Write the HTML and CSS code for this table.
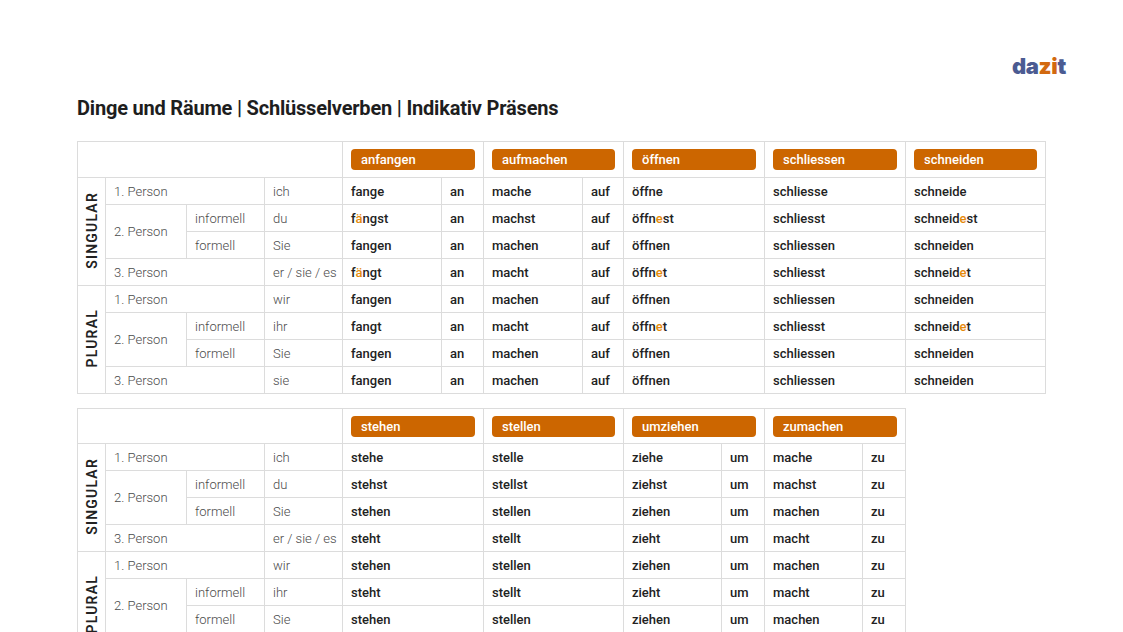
FILE: index.html
```html
<!DOCTYPE html>
<html lang="de">
<head>
<meta charset="utf-8">
<title>Dinge und Räume | Schlüsselverben | Indikativ Präsens</title>
<link rel="stylesheet" href="styles.css">
</head>
<body>
<div class="page">
  <div class="topbar"><span class="logo"><span class="b">da</span><span class="o">zi</span><span class="b">t</span></span></div>
  <h1 class="title">Dinge und Räume | Schlüsselverben | Indikativ Präsens</h1>

  <table class="conj t1">
    <colgroup>
      <col class="w-num"><col class="w-person"><col class="w-form"><col class="w-pron">
      <col class="w-v99"><col class="w-p42"><col class="w-v99"><col class="w-p41">
      <col class="w-v141"><col class="w-v141"><col class="w-v140">
    </colgroup>
    <tr class="head">
      <th colspan="4"></th>
      <th colspan="2"><span class="pill">anfangen</span></th>
      <th colspan="2" class="grp"><span class="pill">aufmachen</span></th>
      <th class="grp"><span class="pill">öffnen</span></th>
      <th class="grp"><span class="pill">schliessen</span></th>
      <th class="grp"><span class="pill">schneiden</span></th>
    </tr>
    <tr>
      <td rowspan="4" class="num"><span class="vert">SINGULAR</span></td>
      <td colspan="2" class="lab">1. Person</td><td class="lab">ich</td>
      <td class="v">fange</td><td class="v">an</td>
      <td class="v grp">mache</td><td class="v">auf</td>
      <td class="v grp">öffne</td>
      <td class="v grp">schliesse</td>
      <td class="v grp">schneide</td>
    </tr>
    <tr>
      <td rowspan="2" class="lab">2. Person</td><td class="lab">informell</td><td class="lab">du</td>
      <td class="v">f<span class="hl">ä</span>ngst</td><td class="v">an</td>
      <td class="v grp">machst</td><td class="v">auf</td>
      <td class="v grp">öffn<span class="hl">e</span>st</td>
      <td class="v grp">schliesst</td>
      <td class="v grp">schneid<span class="hl">e</span>st</td>
    </tr>
    <tr>
      <td class="lab">formell</td><td class="lab">Sie</td>
      <td class="v">fangen</td><td class="v">an</td>
      <td class="v grp">machen</td><td class="v">auf</td>
      <td class="v grp">öffnen</td>
      <td class="v grp">schliessen</td>
      <td class="v grp">schneiden</td>
    </tr>
    <tr>
      <td colspan="2" class="lab">3. Person</td><td class="lab">er / sie / es</td>
      <td class="v">f<span class="hl">ä</span>ngt</td><td class="v">an</td>
      <td class="v grp">macht</td><td class="v">auf</td>
      <td class="v grp">öffn<span class="hl">e</span>t</td>
      <td class="v grp">schliesst</td>
      <td class="v grp">schneid<span class="hl">e</span>t</td>
    </tr>
    <tr>
      <td rowspan="4" class="num"><span class="vert">PLURAL</span></td>
      <td colspan="2" class="lab">1. Person</td><td class="lab">wir</td>
      <td class="v">fangen</td><td class="v">an</td>
      <td class="v grp">machen</td><td class="v">auf</td>
      <td class="v grp">öffnen</td>
      <td class="v grp">schliessen</td>
      <td class="v grp">schneiden</td>
    </tr>
    <tr>
      <td rowspan="2" class="lab">2. Person</td><td class="lab">informell</td><td class="lab">ihr</td>
      <td class="v">fangt</td><td class="v">an</td>
      <td class="v grp">macht</td><td class="v">auf</td>
      <td class="v grp">öffn<span class="hl">e</span>t</td>
      <td class="v grp">schliesst</td>
      <td class="v grp">schneid<span class="hl">e</span>t</td>
    </tr>
    <tr>
      <td class="lab">formell</td><td class="lab">Sie</td>
      <td class="v">fangen</td><td class="v">an</td>
      <td class="v grp">machen</td><td class="v">auf</td>
      <td class="v grp">öffnen</td>
      <td class="v grp">schliessen</td>
      <td class="v grp">schneiden</td>
    </tr>
    <tr>
      <td colspan="2" class="lab">3. Person</td><td class="lab">sie</td>
      <td class="v">fangen</td><td class="v">an</td>
      <td class="v grp">machen</td><td class="v">auf</td>
      <td class="v grp">öffnen</td>
      <td class="v grp">schliessen</td>
      <td class="v grp">schneiden</td>
    </tr>
  </table>

  <table class="conj t2">
    <colgroup>
      <col class="w-num"><col class="w-person"><col class="w-form"><col class="w-pron">
      <col class="w-v141"><col class="w-v140">
      <col class="w-v98"><col class="w-p43"><col class="w-v98"><col class="w-p43">
    </colgroup>
    <tr class="head">
      <th colspan="4"></th>
      <th><span class="pill">stehen</span></th>
      <th class="grp"><span class="pill">stellen</span></th>
      <th colspan="2" class="grp"><span class="pill">umziehen</span></th>
      <th colspan="2" class="grp"><span class="pill">zumachen</span></th>
    </tr>
    <tr>
      <td rowspan="4" class="num"><span class="vert">SINGULAR</span></td>
      <td colspan="2" class="lab">1. Person</td><td class="lab">ich</td>
      <td class="v">stehe</td>
      <td class="v grp">stelle</td>
      <td class="v grp">ziehe</td><td class="v">um</td>
      <td class="v grp">mache</td><td class="v">zu</td>
    </tr>
    <tr>
      <td rowspan="2" class="lab">2. Person</td><td class="lab">informell</td><td class="lab">du</td>
      <td class="v">stehst</td>
      <td class="v grp">stellst</td>
      <td class="v grp">ziehst</td><td class="v">um</td>
      <td class="v grp">machst</td><td class="v">zu</td>
    </tr>
    <tr>
      <td class="lab">formell</td><td class="lab">Sie</td>
      <td class="v">stehen</td>
      <td class="v grp">stellen</td>
      <td class="v grp">ziehen</td><td class="v">um</td>
      <td class="v grp">machen</td><td class="v">zu</td>
    </tr>
    <tr>
      <td colspan="2" class="lab">3. Person</td><td class="lab">er / sie / es</td>
      <td class="v">steht</td>
      <td class="v grp">stellt</td>
      <td class="v grp">zieht</td><td class="v">um</td>
      <td class="v grp">macht</td><td class="v">zu</td>
    </tr>
    <tr>
      <td rowspan="4" class="num"><span class="vert">PLURAL</span></td>
      <td colspan="2" class="lab">1. Person</td><td class="lab">wir</td>
      <td class="v">stehen</td>
      <td class="v grp">stellen</td>
      <td class="v grp">ziehen</td><td class="v">um</td>
      <td class="v grp">machen</td><td class="v">zu</td>
    </tr>
    <tr>
      <td rowspan="2" class="lab">2. Person</td><td class="lab">informell</td><td class="lab">ihr</td>
      <td class="v">steht</td>
      <td class="v grp">stellt</td>
      <td class="v grp">zieht</td><td class="v">um</td>
      <td class="v grp">macht</td><td class="v">zu</td>
    </tr>
    <tr>
      <td class="lab">formell</td><td class="lab">Sie</td>
      <td class="v">stehen</td>
      <td class="v grp">stellen</td>
      <td class="v grp">ziehen</td><td class="v">um</td>
      <td class="v grp">machen</td><td class="v">zu</td>
    </tr>
    <tr>
      <td colspan="2" class="lab">3. Person</td><td class="lab">sie</td>
      <td class="v">stehen</td>
      <td class="v grp">stellen</td>
      <td class="v grp">ziehen</td><td class="v">um</td>
      <td class="v grp">machen</td><td class="v">zu</td>
    </tr>
  </table>
</div>
</body>
</html>
```
FILE: styles.css
```css
html, body {
  margin: 0;
  padding: 0;
  background: #ffffff;
}
body {
  font-family: Roboto, "Open Sans", "Liberation Sans", sans-serif;
  color: #222;
}
.page {
  padding: 52px 57px 0 77px;
  display: flex;
  flex-direction: column;
}
.topbar {
  display: flex;
  justify-content: flex-end;
  height: 28px;
}
.logo {
  font-family: Inter, "DejaVu Sans", sans-serif;
  font-weight: 900;
  font-size: 22px;
  letter-spacing: -0.3px;
  line-height: 28px;
}
.logo .b { color: #4b5b92; }
.logo .o { color: #d2690f; }
.title {
  margin: 13px 0 18px 0;
  font-size: 20px;
  line-height: 30px;
  font-weight: 700;
  color: #1e1e1e;
  letter-spacing: -0.2px;
}
.conj {
  border-collapse: collapse;
  table-layout: fixed;
  font-size: 13px;
}
.t1 { width: 968px; }
.t2 { width: 828px; margin-top: 14px; }
.w-num { width: 28px; }
.w-person { width: 81px; }
.w-form { width: 78px; }
.w-pron { width: 78px; }
.w-v99 { width: 99px; }
.w-p42 { width: 42px; }
.w-p41 { width: 41px; }
.w-v141 { width: 141px; }
.w-v140 { width: 140px; }
.w-v98 { width: 98px; }
.w-p43 { width: 43px; }
.conj th, .conj td {
  border: 1px solid #dcdcdc;
  padding: 0;
  text-align: left;
  white-space: nowrap;
  overflow: hidden;
}
.conj td { height: 26px; }
.conj .head th {
  height: 35px;
  vertical-align: middle;
}
.t2 .head th { height: 34px; }
.conj .grp { border-left: 1px solid #8c8c8c; }
.pill {
  display: block;
  margin: 0 8px 0 8px;
  height: 21px;
  line-height: 21px;
  padding-left: 10px;
  background: #cc6600;
  border-radius: 4px;
  color: #fff;
  font-weight: 500;
  font-size: 13px;
}
.lab {
  font-weight: 300;
  color: #4a4a4a;
  padding-left: 8px !important;
}
.v {
  font-weight: 500;
  color: #222;
  padding-left: 8px !important;
}
.hl { color: #e58a0a; }
.num {
  text-align: center !important;
  vertical-align: middle;
}
.vert {
  display: inline-block;
  writing-mode: vertical-rl;
  transform: rotate(180deg);
  font-weight: 600;
  font-size: 14px;
  letter-spacing: 1.2px;
  color: #222;
}
```
